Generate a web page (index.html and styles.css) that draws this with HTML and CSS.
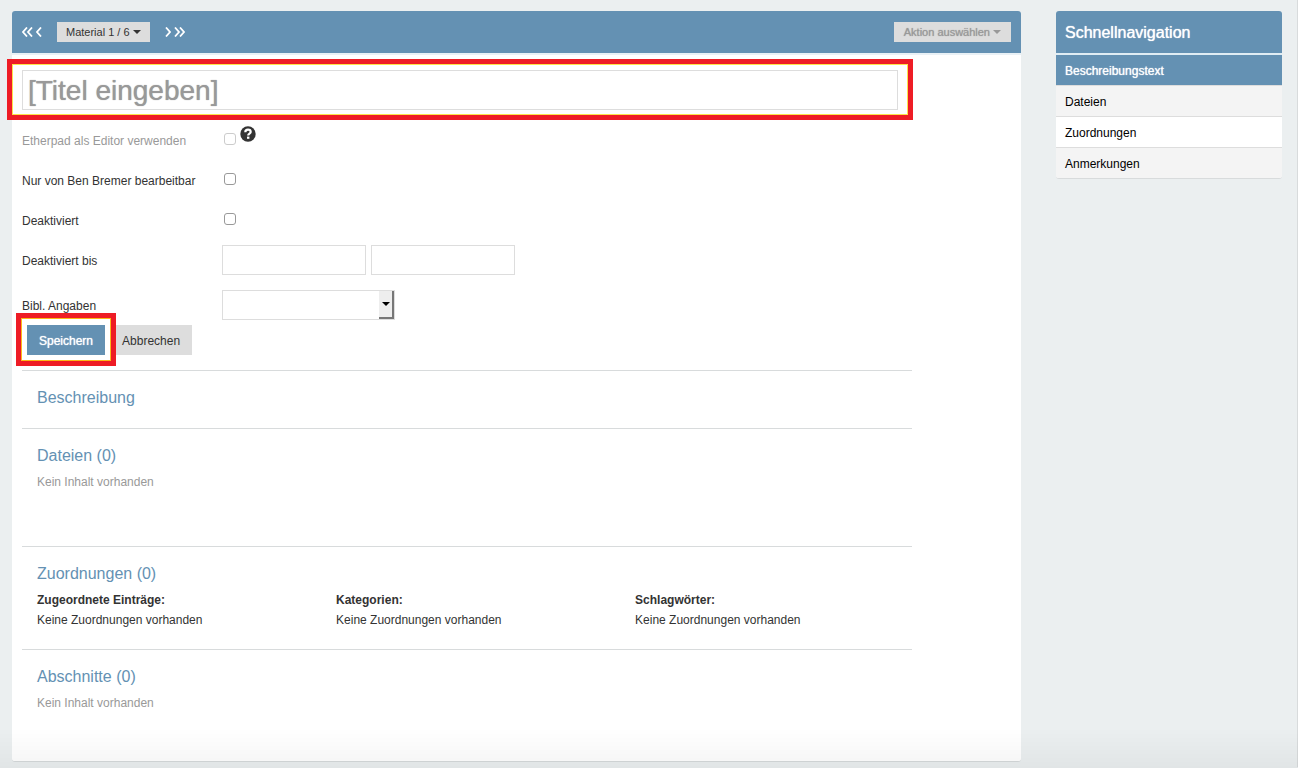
FILE: index.html
```html
<!DOCTYPE html>
<html lang="de">
<head>
<meta charset="utf-8">
<title>Material</title>
<meta name="viewport" content="width=device-width, initial-scale=1">
<link rel="stylesheet" href="styles.css">
</head>
<body>
<div class="page">
  <main class="panel">
    <header class="toolbar">
      <nav class="pager" aria-label="Materialien">
        <a class="pager-link" href="#first" aria-label="Erstes"><svg width="11" height="10" viewBox="0 0 11 10"><path d="M5 .5 1 5l4 4.500M10 .5 6 5l4 4.500"/></svg></a>
        <a class="pager-link" href="#previous" aria-label="Zurück"><svg width="6" height="10" viewBox="0 0 6 10"><path d="M5 .5 1 5l4 4.500"/></svg></a>
        <button class="drop pager-drop" type="button">Material 1 / 6<span class="caret"></span></button>
        <a class="pager-link" href="#next" aria-label="Weiter"><svg width="6" height="10" viewBox="0 0 6 10"><path d="M1 .5 5 5 1 9.500"/></svg></a>
        <a class="pager-link" href="#last" aria-label="Letztes"><svg width="11" height="10" viewBox="0 0 11 10"><path d="M1 .5 5 5 1 9.500M6 .5 10 5 6 9.500"/></svg></a>
      </nav>
      <button class="drop" type="button" disabled>Aktion auswählen<span class="caret"></span></button>
    </header>
    <div class="body">
      <div class="content">
        <form class="form">
          <div class="title-field marked">
            <input class="title-input" type="text" placeholder="[Titel eingeben]" aria-label="Titel">
          </div>
          <div class="row">
            <label class="label muted" for="etherpad">Etherpad als Editor verwenden</label>
            <input class="check" type="checkbox" id="etherpad" disabled>
            <svg class="help" width="16" height="16" viewBox="0 0 16 16" role="img" aria-label="Hilfe"><circle cx="8" cy="8" r="7.700" fill="#333"/><path d="M5.300 6.300C5.300 4.500 6.500 3.700 8 3.700s2.700.8 2.700 2.300c0 1.600-2.500 1.600-2.500 3.400" fill="none" stroke="#fff" stroke-width="2.200"/><rect x="7" y="10.600" width="2.400" height="2.200" fill="#fff"/></svg>
          </div>
          <div class="row">
            <label class="label" for="private">Nur von Ben Bremer bearbeitbar</label>
            <input class="check" type="checkbox" id="private">
          </div>
          <div class="row">
            <label class="label" for="inactive">Deaktiviert</label>
            <input class="check" type="checkbox" id="inactive">
          </div>
          <div class="row">
            <label class="label" for="until">Deaktiviert bis</label>
            <div class="pair">
              <input class="text" type="text" id="until">
              <input class="text" type="text" aria-label="Uhrzeit">
            </div>
          </div>
          <div class="row row-last">
            <label class="label" for="bib">Bibl. Angaben</label>
            <div class="select-box">
              <select class="select" id="bib"><option></option></select>
              <span class="select-arrow"></span>
            </div>
          </div>
          <div class="actions">
            <span class="marked save-mark"><button class="button primary" type="submit">Speichern</button></span>
            <button class="button" type="button">Abbrechen</button>
          </div>
        </form>
        <section class="section">
          <h2 class="heading">Beschreibung</h2>
        </section>
        <section class="section files">
          <h2 class="heading">Dateien (0)</h2>
          <p class="line muted">Kein Inhalt vorhanden</p>
        </section>
        <section class="section">
          <h2 class="heading">Zuordnungen (0)</h2>
          <div class="columns">
            <div><h3 class="line strong">Zugeordnete Einträge:</h3><p class="line">Keine Zuordnungen vorhanden</p></div>
            <div><h3 class="line strong">Kategorien:</h3><p class="line">Keine Zuordnungen vorhanden</p></div>
            <div><h3 class="line strong">Schlagwörter:</h3><p class="line">Keine Zuordnungen vorhanden</p></div>
          </div>
        </section>
        <section class="section parts">
          <h2 class="heading">Abschnitte (0)</h2>
          <p class="line muted">Kein Inhalt vorhanden</p>
        </section>
      </div>
    </div>
  </main>
  <aside class="quick">
    <h2 class="quick-title">Schnellnavigation</h2>
    <nav class="quick-nav">
      <a class="quick-link active" href="#text">Beschreibungstext</a>
      <a class="quick-link" href="#dateien">Dateien</a>
      <a class="quick-link" href="#zuordnungen">Zuordnungen</a>
      <a class="quick-link" href="#anmerkungen">Anmerkungen</a>
    </nav>
  </aside>
</div>
</body>
</html>
```
FILE: styles.css
```css
* { box-sizing: border-box; }
body {
  margin: 0;
  background: #ebeff0;
  color: #333;
  font: 12px/20px "Liberation Sans", Arial, sans-serif;
}
/* soft shade along the lower window edge */
body::after {
  content: "";
  position: fixed;
  inset: auto 0 0 0;
  height: 40px;
  background: linear-gradient(transparent, rgba(0, 0, 0, .04));
  pointer-events: none;
}
h2, h3, p { margin: 0; font-weight: normal; }
button, input, select { font: inherit; color: inherit; margin: 0; }
.page {
  display: grid;
  grid-template-columns: 1fr 226px;
  gap: 35px;
  align-items: start;
  padding: 11px 15px 5px 12px;
  border-right: 1px solid #d8dbdc;
}
.panel {
  background: #fff;
  border-radius: 3px;
  border-bottom: 1px solid #d5d9da;
}
.toolbar {
  display: flex;
  align-items: center;
  justify-content: space-between;
  height: 44px;
  padding: 0 10px;
  background: #6491b3;
  border-bottom: 2px solid #e9f1f6;
  border-radius: 3px 3px 0 0;
}
.pager { display: flex; align-items: center; gap: 3px; }
.pager-link { display: flex; }
.pager-link path { fill: none; stroke: #fff; stroke-width: 1.800; }
.pager-drop { margin: 0 12px; }
.drop {
  display: flex;
  align-items: center;
  gap: 3px;
  height: 20px;
  padding: 0 9px;
  border: 0;
  background: #ddd;
  font-size: 11px;
}
.drop:disabled { color: #999; text-shadow: 0 0 1px currentColor; padding: 0 10px; }
.caret {
  border: 4px solid transparent;
  border-top-color: currentColor;
  border-bottom: 0;
}
.body { padding: 15px 10px 0; }
.content { width: 90%; }
.marked { position: relative; }
.marked::after {
  content: "";
  position: absolute;
  inset: -11px -15px -10px;
  border: 5px solid #ee1c25;
  box-shadow: inset 0 0 0 1px #fbe34a;
  pointer-events: none;
}
.save-mark { display: flex; }
.save-mark::after {
  inset: -12px -11px -11px;
  box-shadow: inset 0 0 0 1px #fdb71a;
}
.title-field { margin-right: 14px; margin-bottom: 10px; }
.title-input {
  display: block;
  width: 100%;
  height: 40px;
  padding: 2px 5px 0;
  border: 1px solid #ddd;
  font-size: 28px;
}
.title-input::placeholder { color: #999; opacity: 1; text-shadow: 0 0 1px currentColor; }
.row { display: flex; align-items: center; min-height: 40px; }
.row-last { padding: 10px 0 5px; }
.label { width: 200px; padding-top: 2px; }
.muted { color: #999; }
.check {
  appearance: none;
  width: 12px;
  height: 12px;
  margin: 0 0 3px 2px;
  border: 1px solid #999;
  border-radius: 3px;
  background: #fff;
}
.check:disabled { border-color: #ccc; }
.help { margin: 0 0 12px 4px; }
.pair { display: flex; gap: 5px; }
.text { width: 144px; height: 30px; border: 1px solid #ddd; }
.select-box { position: relative; width: 173px; }
.select {
  appearance: none;
  display: block;
  width: 100%;
  height: 30px;
  border: 1px solid #ddd;
  border-radius: 0;
  background: #fff;
}
.select-arrow {
  position: absolute;
  inset: 1px 1px 1px auto;
  width: 15px;
  display: grid;
  place-items: center;
  background: #eee;
  border: solid #777;
  border-width: 0 2px 2px 0;
  pointer-events: none;
}
.select-arrow::before {
  content: "";
  border: 4px solid transparent;
  border-top-color: #000;
  border-bottom: 0;
}
.actions { display: flex; gap: 5px; padding: 0 5px 15px; }
.button { height: 30px; padding: 2px 12px 0; border: 0; background: #ddd; }
.primary { background: #6491b3; color: #fff; text-shadow: 0 0 1px #fff; }
.section { padding: 16px 0 19px 15px; border-top: 1px solid #d8dbdc; }
.heading { color: #6491b3; font-size: 16px; line-height: 22px; }
.heading + * { margin-top: 5px; }
.files { padding-bottom: 54px; }
.parts { padding-bottom: 48px; }
.columns { display: grid; grid-template-columns: repeat(3, 1fr); gap: 22px; }
.strong { font-size: 12px; font-weight: bold; }
.quick { border-radius: 3px; overflow: hidden; border-bottom: 1px solid #d8dbdc; }
.quick-title {
  padding: 11px 9px 9px;
  background: #6491b3;
  border-bottom: 2px solid #e0edf4;
  color: #fff;
  font-size: 16px;
  line-height: 22px;
  text-shadow: 0 0 1px #fff;
}
.quick-link {
  display: block;
  padding: 6px 9px 4px;
  border-bottom: 1px solid #ddd;
  background: #f4f4f4;
  color: #000;
  text-decoration: none;
}
.quick-link:nth-child(odd) { background: #fff; }
.quick-link:last-child { border-bottom: 0; background: #f4f4f4; }
.quick-link.active { background: #6491b3; color: #fff; text-shadow: 0 0 1px #fff; }
```
